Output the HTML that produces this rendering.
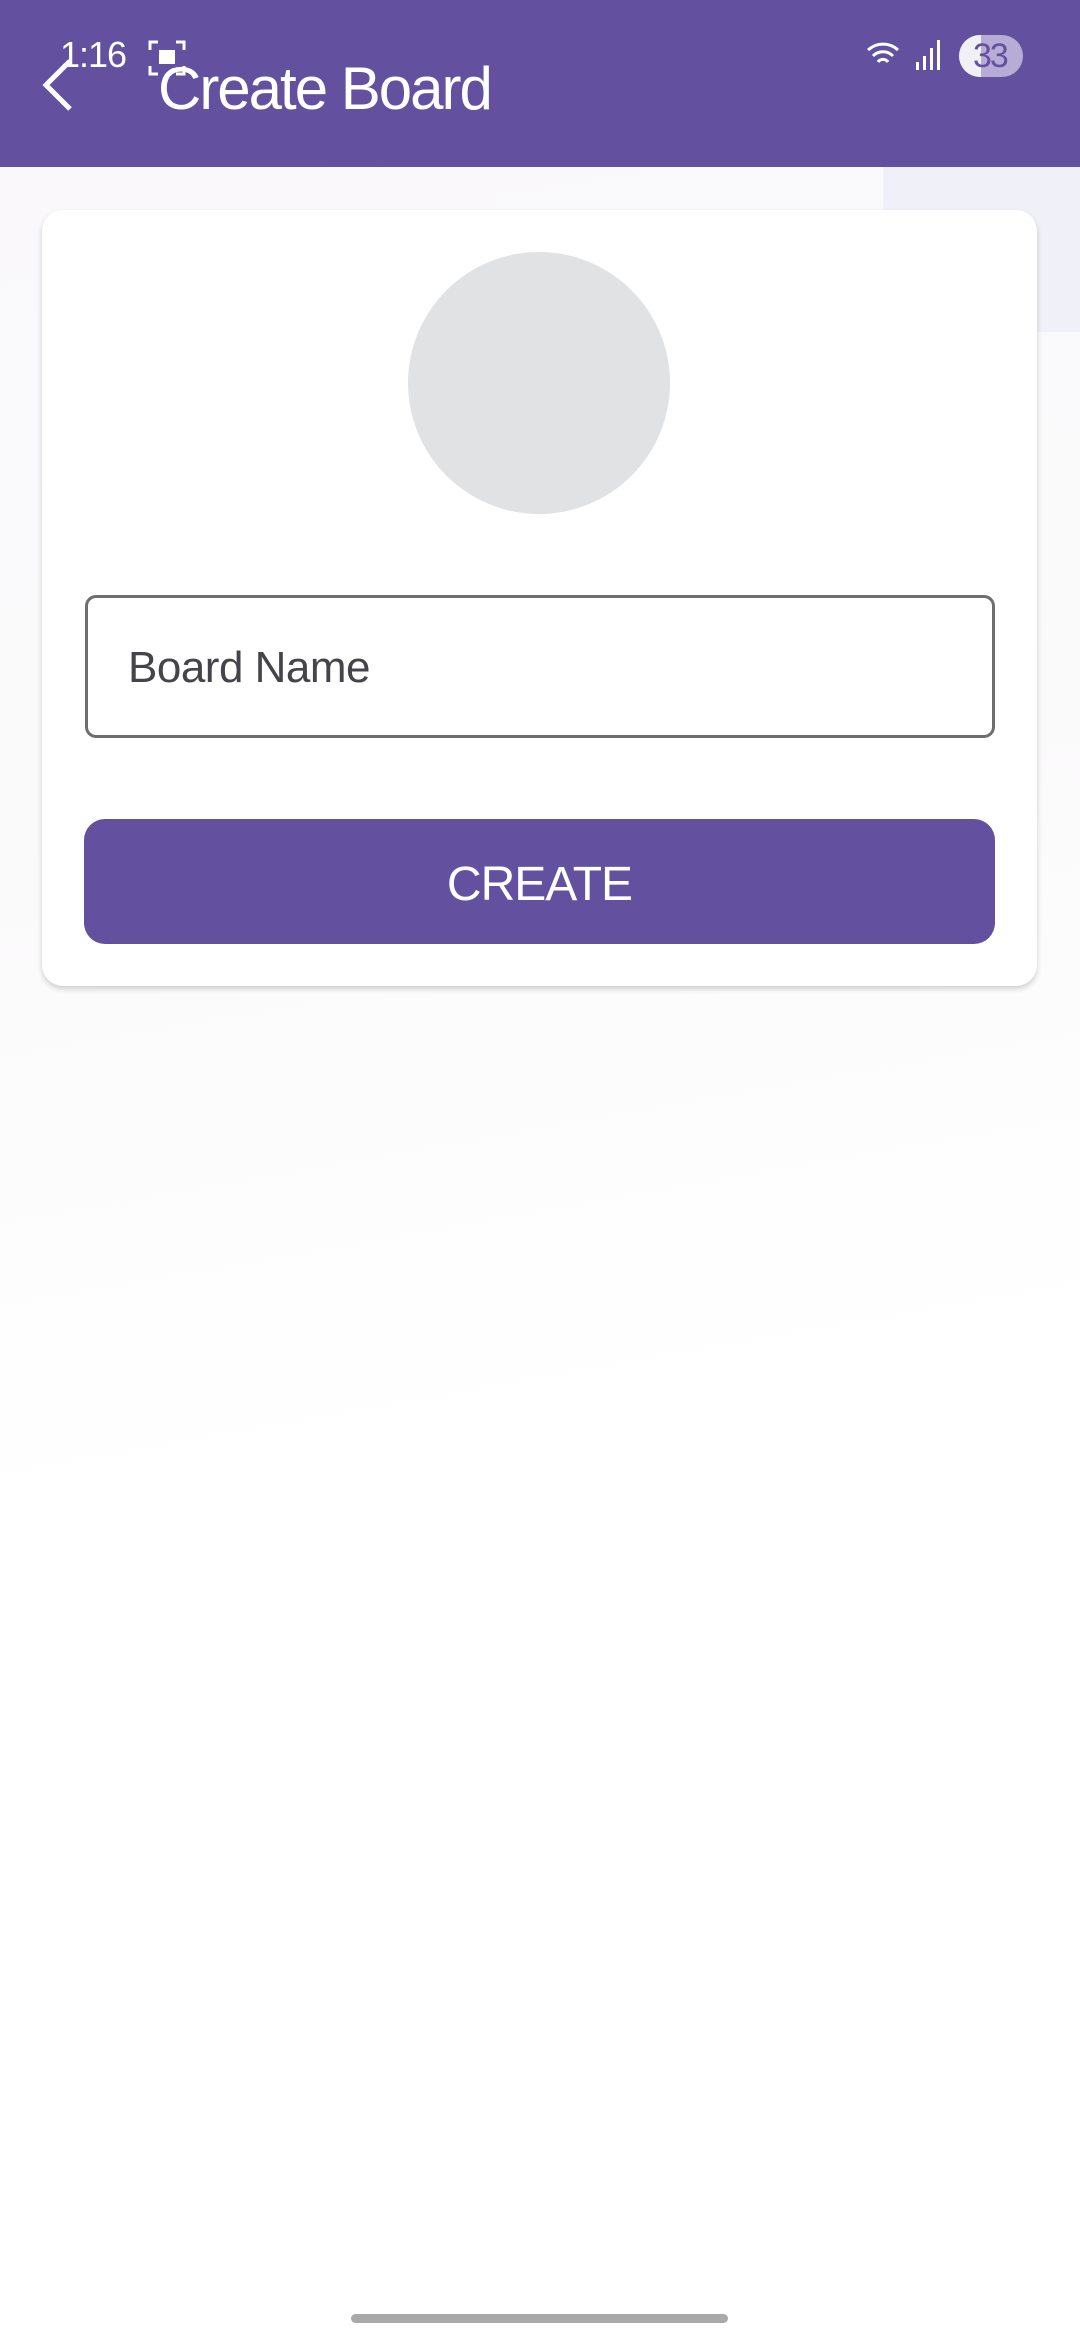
<!DOCTYPE html>
<html><head><meta charset="utf-8"><style>
*{margin:0;padding:0;box-sizing:border-box}
body{width:1080px;height:2340px;overflow:hidden;font-family:"Liberation Sans",sans-serif;background:linear-gradient(170deg,#f9f8fb 0%,#fbfafb 35%,#ffffff 60%);position:relative}
.hdr{position:absolute;left:0;top:0;width:1080px;height:167px;background:#63519f}
.sq{position:absolute;left:883px;top:167px;width:197px;height:165px;background:#f0f1f8}
.card{position:absolute;left:42px;top:210px;width:995px;height:776px;background:#fff;border-radius:21px;box-shadow:0 3px 6px rgba(0,0,0,0.18)}
.circ{position:absolute;left:408px;top:252px;width:262px;height:262px;border-radius:50%;background:#e1e2e4}
.inp{position:absolute;left:85px;top:595px;width:910px;height:143px;border:3px solid #6e6e70;border-radius:11px}
.inp span{position:absolute;left:40px;top:45px;font-size:44px;color:#45444a;letter-spacing:-0.5px}
.btn{position:absolute;left:84px;top:819px;width:911px;height:125px;background:#63519f;border-radius:21px;color:#fff;font-size:48px;text-align:center;line-height:131px;letter-spacing:-1px}
.title{position:absolute;left:158px;top:54px;font-size:60px;color:#fff;letter-spacing:-2px}
.time{position:absolute;left:60px;top:34px;font-size:36px;color:#fff;letter-spacing:-1px}
.home{position:absolute;left:351px;top:2314px;width:377px;height:9px;border-radius:5px;background:#a9a9a9}
</style></head><body>
<div class="hdr"></div>
<div class="sq"></div>
<svg style="position:absolute;left:40px;top:58px" width="36" height="54"><polyline points="30,3 6,27 30,51" fill="none" stroke="#fff" stroke-width="5"/></svg>
<div class="time">1:16</div>
<svg style="position:absolute;left:148px;top:40px" width="38" height="36"><path d="M2 10V2h8M28 2h8v8M36 26v8h-8M10 34H2v-8" fill="none" stroke="#fff" stroke-width="3"/><rect x="11" y="10" width="16" height="14" fill="#fff"/></svg>
<div class="title">Create Board</div>
<svg style="position:absolute;left:864px;top:38px" width="80" height="36"><path d="M4 12a22 22 0 0 1 30 0M9 18a14 14 0 0 1 20 0M14 24a6 6 0 0 1 10 0" fill="none" stroke="#fff" stroke-width="3"/><rect x="52" y="24" width="3" height="8" fill="#fff"/><rect x="59" y="18" width="3" height="14" fill="#fff"/><rect x="66" y="10" width="3" height="22" fill="#fff"/><rect x="73" y="2" width="3" height="30" fill="#fff"/></svg>
<div style="position:absolute;left:959px;top:35px;width:64px;height:42px;border-radius:21px;background:#b7acd6;overflow:hidden"><div style="width:22px;height:42px;background:#f1f1f5"></div><span style="position:absolute;left:14px;top:2px;font-size:34px;color:#63519f;letter-spacing:-2px">33</span></div>
<div class="card"></div>
<div class="circ"></div>
<div class="inp"><span>Board Name</span></div>
<div class="btn">CREATE</div>
<div class="home"></div>
</body></html>
